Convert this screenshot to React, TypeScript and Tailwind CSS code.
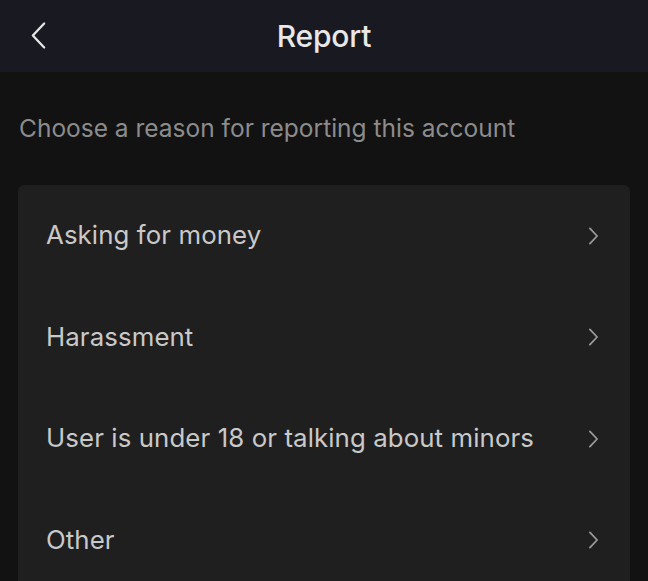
import React from "react";

const reasons = [
  "Asking for money",
  "Harassment",
  "User is under 18 or talking about minors",
  "Other",
];

const Chevron: React.FC<{ dir: "left" | "right"; className?: string }> = ({ dir, className }) => (
  <svg viewBox="0 0 12 20" className={className} fill="none" stroke="currentColor" strokeLinecap="round" strokeLinejoin="round">
    {dir === "left" ? <path d="M10 1.5 2 10l8 8.5" /> : <path d="M2 1.5 10 10l-8 8.5" />}
  </svg>
);

const App: React.FC = () => {
  return (
    <div className="min-h-[581px] w-full bg-[#121212] font-['Inter',sans-serif] overflow-hidden">
      <header className="relative flex h-[72px] items-center justify-center bg-[#181921]">
        <button className="absolute left-[30px] top-[21px] text-[#e6e6e6]">
          <Chevron dir="left" className="h-[29px] w-[17px] [stroke-width:1.6]" />
        </button>
        <h1 className="text-[30px] leading-[34px] font-medium text-[#e8e8e8] tracking-[-0.2px]">Report</h1>
      </header>

      <p className="px-[19px] pt-[41px] text-[24.5px] leading-[30px] text-[#8c8c8c]">
        Choose a reason for reporting this account
      </p>

      <div className="mx-[18px] mt-[42px] rounded-[6px] bg-[#1f1f1f]">
        {reasons.map((r) => (
          <div key={r} className="flex h-[101.5px] items-center justify-between pl-[28px] pr-[31px]">
            <span className="text-[25.8px] text-[#c9c9c9] tracking-[0.1px]">{r}</span>
            <Chevron dir="right" className="h-[18px] w-[11px] text-[#9a9a9a] [stroke-width:2]" />
          </div>
        ))}
      </div>
    </div>
  );
};

export default App;
